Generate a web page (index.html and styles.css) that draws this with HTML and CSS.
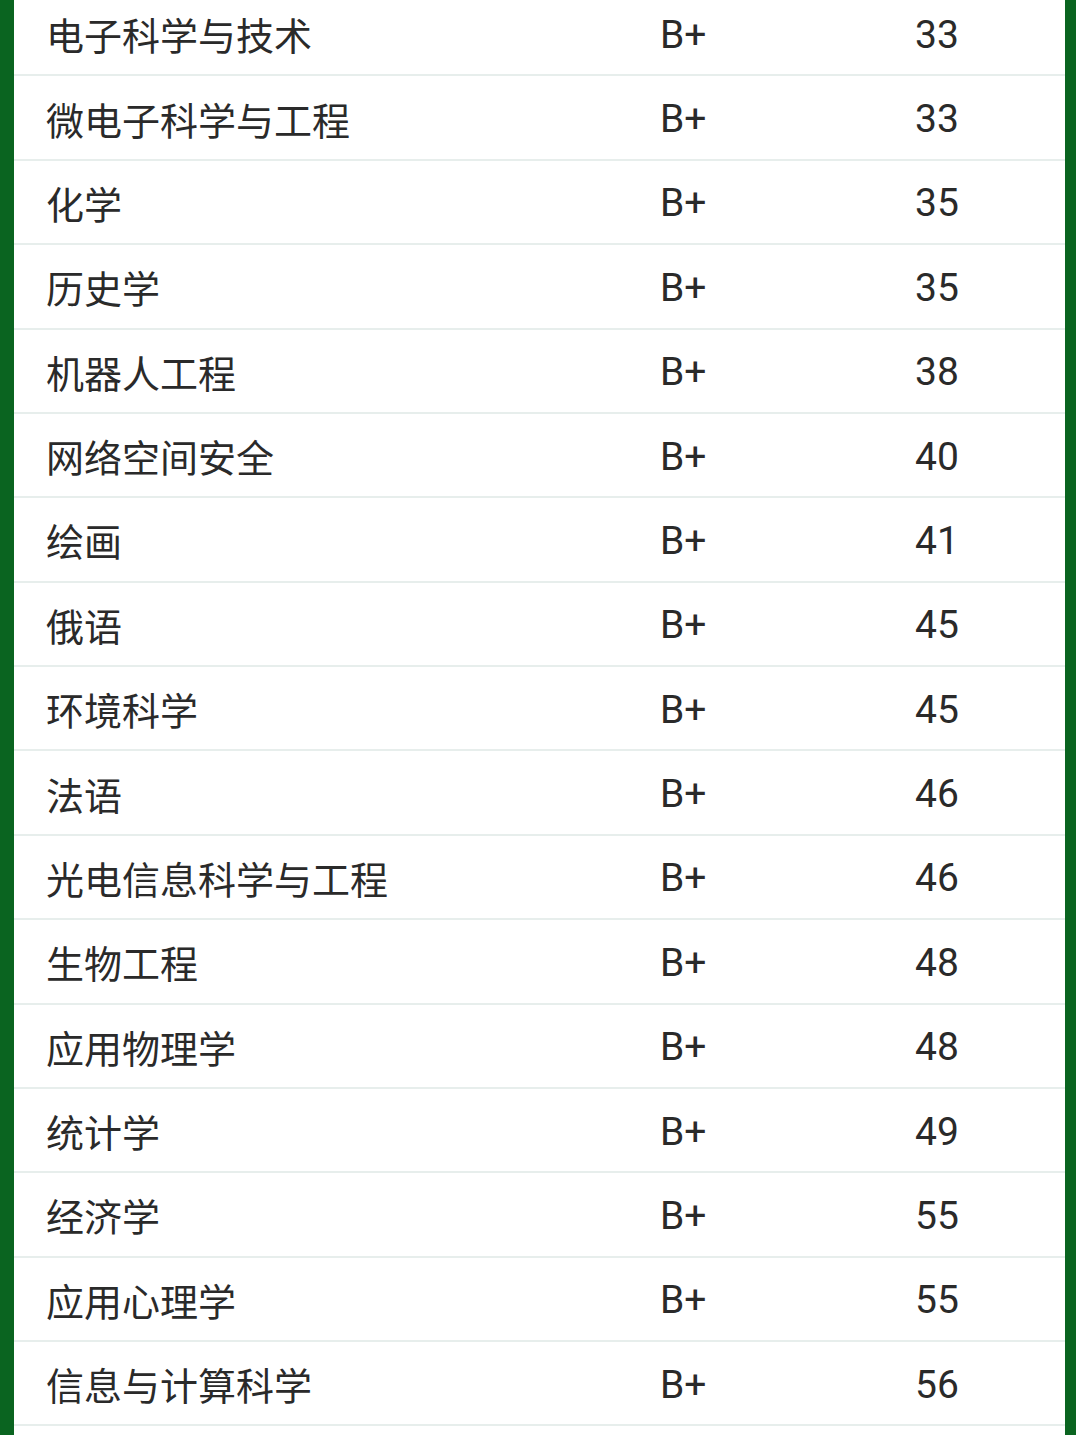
FILE: index.html
```html
<!DOCTYPE html>
<html lang="zh-CN">
<head>
<meta charset="utf-8">
<title>学科评估</title>
<link rel="stylesheet" href="styles.css">
</head>
<body>
<div class="frame">
  <div class="list">
    <div class="row"><span class="name">电子科学与技术</span><span class="grade">B+</span><span class="rank">33</span></div>
    <div class="row"><span class="name">微电子科学与工程</span><span class="grade">B+</span><span class="rank">33</span></div>
    <div class="row"><span class="name">化学</span><span class="grade">B+</span><span class="rank">35</span></div>
    <div class="row"><span class="name">历史学</span><span class="grade">B+</span><span class="rank">35</span></div>
    <div class="row"><span class="name">机器人工程</span><span class="grade">B+</span><span class="rank">38</span></div>
    <div class="row"><span class="name">网络空间安全</span><span class="grade">B+</span><span class="rank">40</span></div>
    <div class="row"><span class="name">绘画</span><span class="grade">B+</span><span class="rank">41</span></div>
    <div class="row"><span class="name">俄语</span><span class="grade">B+</span><span class="rank">45</span></div>
    <div class="row"><span class="name">环境科学</span><span class="grade">B+</span><span class="rank">45</span></div>
    <div class="row"><span class="name">法语</span><span class="grade">B+</span><span class="rank">46</span></div>
    <div class="row"><span class="name">光电信息科学与工程</span><span class="grade">B+</span><span class="rank">46</span></div>
    <div class="row"><span class="name">生物工程</span><span class="grade">B+</span><span class="rank">48</span></div>
    <div class="row"><span class="name">应用物理学</span><span class="grade">B+</span><span class="rank">48</span></div>
    <div class="row"><span class="name">统计学</span><span class="grade">B+</span><span class="rank">49</span></div>
    <div class="row"><span class="name">经济学</span><span class="grade">B+</span><span class="rank">55</span></div>
    <div class="row"><span class="name">应用心理学</span><span class="grade">B+</span><span class="rank">55</span></div>
    <div class="row"><span class="name">信息与计算科学</span><span class="grade">B+</span><span class="rank">56</span></div>
  </div>
</div>
</body>
</html>
```

FILE: styles.css
```css
html, body {
  margin: 0;
  padding: 0;
  background: #ffffff;
}

body {
  width: 1080px;
  height: 1443px;
  overflow: hidden;
  font-family: Roboto, "Noto Sans CJK SC", sans-serif;
  color: #2a2a2a;
}

.frame {
  width: 1051px;
  min-height: 1443px;
  border-left: 14px solid #0a6420;
  border-right: 11px solid #0a6420;
  box-sizing: content-box;
}

.list {
  display: flex;
  flex-direction: column;
  margin-top: -8px;
}

.row {
  display: grid;
  grid-template-columns: 614px 255px 1fr;
  align-items: center;
  height: 84.375px;
  box-sizing: border-box;
  padding-left: 32px;
  padding-top: 4px;
  border-bottom: 2px solid #e7eeec;
  line-height: 1;
}

.name {
  font-family: "Noto Sans CJK SC", sans-serif;
  font-size: 38px;
  margin-top: -2px;
}

.grade,
.rank {
  font-family: Roboto, "Noto Sans", sans-serif;
  font-size: 39px;
}
```
